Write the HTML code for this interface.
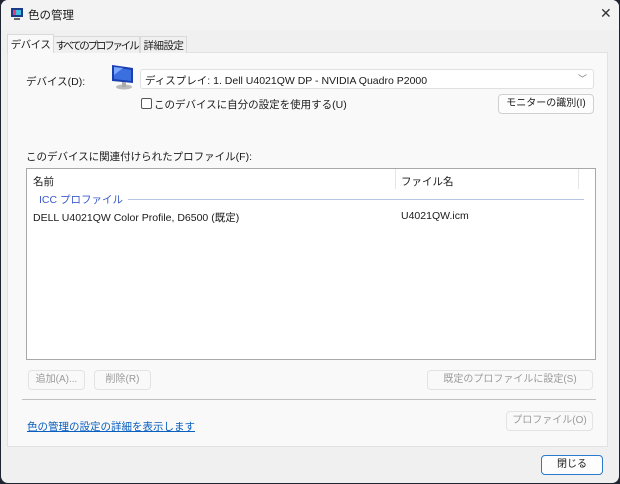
<!DOCTYPE html><html><head><meta charset="utf-8"><style>
*{margin:0;padding:0;box-sizing:border-box}
body{width:620px;height:484px;overflow:hidden;font-family:"Liberation Sans","Noto Sans CJK JP",sans-serif;font-size:10.5px;color:#1a1a1a;background:#1e2430}
.win{position:absolute;left:1px;top:0;width:618px;height:483px;background:#f0f0f0;border-radius:7px;overflow:hidden}
.title{position:absolute;left:0;top:0;width:618px;height:30px;background:#f3f3f3}
.abs{position:absolute;white-space:nowrap}
.panel{position:absolute;left:6px;top:52px;width:601px;height:395px;background:#f9f9f9;border:1px solid #e2e2e2}
.tab{position:absolute;top:36px;height:17px;border:1px solid #d9d9d9;border-bottom:none;background:#f0f0f0;padding-top:1px;text-align:center;font-size:10.5px;overflow:hidden;white-space:nowrap}
.btn{position:absolute;height:20px;border:1px solid #d0d0d0;border-radius:4px;background:#fdfdfd;text-align:center;line-height:18px;font-size:10px}
.dis{color:#9a9a9a;background:#f9f9f9;border-color:#e3e3e3}
</style></head><body><div class="win">
<div class="title"></div>
<svg class="abs" style="left:9px;top:7px" width="14" height="14"><rect x="1" y="1" width="12" height="9" fill="#1a3a8a"/><rect x="3" y="3" width="8" height="5" fill="#e0407a"/><rect x="6" y="3" width="5" height="5" fill="#40c0e0"/><rect x="4" y="11" width="6" height="2" fill="#666"/></svg>
<div class="abs" style="left:27px;top:7px;font-size:11.5px">色の管理</div>
<div class="abs" style="left:599px;top:5px;font-size:14px;color:#333">✕</div>
<div class="panel"></div>
<div class="tab" style="left:52px;width:87px;letter-spacing:-2.2px">すべてのプロファイル</div>
<div class="tab" style="left:139px;width:47px;letter-spacing:-0.5px">詳細設定</div>
<div class="tab" style="left:6px;top:34px;width:47px;height:19px;background:#f9f9f9;padding-top:2px;letter-spacing:-0.5px">デバイス</div>
<div class="abs" style="left:25px;top:74px">デバイス(D):</div>
<svg class="abs" style="left:108px;top:63px" width="26" height="28"><polygon points="3,2 24,5 24,20 3,18" fill="#1a3fb0"/><polygon points="5,4 22,7 22,18 5,16" fill="#3b6fe0"/><polygon points="5,4 14,5 5,12" fill="#7aa6ff"/><ellipse cx="15" cy="24" rx="8" ry="2.5" fill="#bbb"/><rect x="13" y="19" width="4" height="5" fill="#aaa"/></svg>
<div class="abs" style="left:139px;top:69px;width:454px;height:20px;background:#fff;border:1px solid #e0e0e0;border-radius:3px;padding:3px 0 0 4px">ディスプレイ: 1. Dell U4021QW DP - NVIDIA Quadro P2000<span style="position:absolute;right:6px;top:2px;color:#777;font-size:9px">﹀</span></div>
<div class="abs" style="left:140px;top:98px;width:11px;height:11px;border:1px solid #555;border-radius:2px;background:#fff"></div>
<div class="abs" style="left:153px;top:97px">このデバイスに自分の設定を使用する(U)</div>
<div class="btn" style="left:497px;top:94px;width:96px">モニターの識別(I)</div>
<div class="abs" style="left:25px;top:149px">このデバイスに関連付けられたプロファイル(F):</div>
<div class="abs" style="left:25px;top:168px;width:570px;height:192px;background:#fff;border:1px solid #a8a8a8"></div>
<div class="abs" style="left:394px;top:169px;width:1px;height:20px;background:#e5e5e5"></div>
<div class="abs" style="left:577px;top:169px;width:1px;height:20px;background:#e5e5e5"></div>
<div class="abs" style="left:32px;top:174px">名前</div>
<div class="abs" style="left:400px;top:174px">ファイル名</div>
<div class="abs" style="left:38px;top:192px;color:#3a5ac8">ICC プロファイル</div>
<div class="abs" style="left:127px;top:199px;width:456px;height:1px;background:#b8c4e4"></div>
<div class="abs" style="left:32px;top:210px">DELL U4021QW Color Profile, D6500 (既定)</div>
<div class="abs" style="left:400px;top:210px">U4021QW.icm</div>
<div class="btn dis" style="left:27px;top:370px;width:57px">追加(A)...</div>
<div class="btn dis" style="left:93px;top:370px;width:57px">削除(R)</div>
<div class="btn dis" style="left:426px;top:370px;width:166px">既定のプロファイルに設定(S)</div>
<div class="abs" style="left:21px;top:399px;width:574px;height:1px;background:#c0c0c0"></div>
<div class="abs" style="left:26px;top:419px;color:#0a5fc0;text-decoration:underline">色の管理の設定の詳細を表示します</div>
<div class="btn dis" style="left:505px;top:411px;width:87px">プロファイル(O)</div>
<div class="btn" style="left:540px;top:455px;width:62px;border:1px solid #2a7ad0;border-radius:4px">閉じる</div>
</div></body></html>
